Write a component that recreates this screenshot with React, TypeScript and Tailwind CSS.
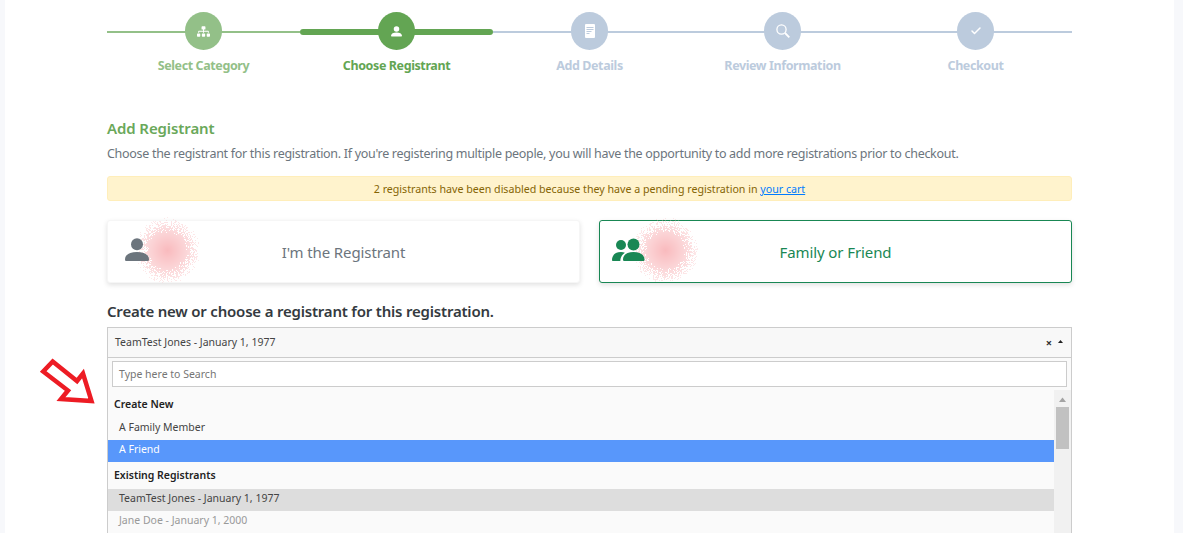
import type { ReactNode } from 'react'
import { FaSitemap } from 'react-icons/fa'
import { Check } from 'lucide-react'

function seededSpots(seed: number) {
    let s = seed
    const rand = () => {
        s = (s * 16807) % 2147483647
        return s / 2147483647
    }
    const spots: { x: number; y: number; o: number }[] = []
    for (let y = 0; y < 70; y++) {
        for (let x = 0; x < 70; x++) {
            const r = Math.hypot(x - 35, y - 35)
            if (r > 33) continue
            const fall = 1 - r / 33
            if (rand() > fall * 2 + 0.06) continue
            spots.push({ x, y, o: 0.25 + fall * 0.6 })
        }
    }
    return spots
}

function Smudge({ seed, className }: { seed: number; className: string }) {
    return (
        <svg width="70" height="70" viewBox="0 0 70 70" className={className}>
            {seededSpots(seed).map((p, i) => (
                <rect key={i} x={p.x} y={p.y} width="1" height="1" fill="#f8aeb2" opacity={p.o} />
            ))}
        </svg>
    )
}

function PersonIcon({ className }: { className: string }) {
    return (
        <svg viewBox="0 0 24 24" className={className} fill="currentColor">
            <circle cx="12" cy="6.3" r="6" />
            <path d="M0 21.5C0 16.5 5 14 12 14s12 2.5 12 7.5c0 1-.6 1.5-1.5 1.5h-21C.6 23 0 22.500 0 21.500z" />
        </svg>
    )
}

function FriendsIcon({ className }: { className: string }) {
    return (
        <svg viewBox="0 0 33 24" className={className} fill="currentColor">
            <circle cx="9" cy="7" r="5" />
            <path d="M0 22c0-4.500 3-8 9-8 1.500 0 2.800.2 3.900.7C10 16.500 8.300 19.500 8.300 23H1.200C.4 23 0 22.700 0 22z" />
            <circle cx="21.500" cy="6.500" r="6" />
            <path d="M11 21.500c0-4.500 4-7.500 10.500-7.500S32.500 17 32.500 21.500c0 1-.6 1.500-1.500 1.500H12.500c-.9 0-1.500-.5-1.500-1.500z" />
        </svg>
    )
}

function DocIcon() {
    return (
        <svg width="10" height="14" viewBox="0 0 10 14">
            <rect width="10" height="14" rx="1" fill="#ffffff" />
            <path d="M1.500 3.500h7M1.500 5.500h7M1.500 7.500h5M1.500 9.500h3" stroke="#bccbdd" strokeWidth="1" />
        </svg>
    )
}

function SearchIcon() {
    return (
        <svg width="14" height="14" viewBox="0 0 14 14" fill="none" stroke="#ffffff">
            <circle cx="5.500" cy="5.500" r="4.600" strokeWidth="1.300" />
            <path d="M9 9l4.300 4.300" strokeWidth="1.800" />
        </svg>
    )
}

interface Step {
    label: string;
    icon: ReactNode;
    circle: string;
    text: string;
    line: string;
}

const steps: Step[] = [
    {
        label: 'Select Category',
        icon: <FaSitemap size={13} />,
        circle: 'bg-[#93c088]',
        text: 'text-[#93c088]',
        line: 'h-0.5 bg-[#93c088]',
    },
    {
        label: 'Choose Registrant',
        icon: <PersonIcon className="h-[11px] w-[11px]" />,
        circle: 'bg-[#63a553]',
        text: 'text-[#63a553]',
        line: 'h-1.5 rounded-full bg-[#63a553]',
    },
    {
        label: 'Add Details',
        icon: <DocIcon />,
        circle: 'bg-[#bccbdd]',
        text: 'text-[#bccbdd]',
        line: 'h-0.5 bg-[#bccbdd]',
    },
    {
        label: 'Review Information',
        icon: <SearchIcon />,
        circle: 'bg-[#bccbdd]',
        text: 'text-[#bccbdd]',
        line: 'h-0.5 bg-[#bccbdd]',
    },
    {
        label: 'Checkout',
        icon: <Check size={12} strokeWidth={3} />,
        circle: 'bg-[#bccbdd]',
        text: 'text-[#bccbdd]',
        line: 'h-0.5 bg-[#bccbdd]',
    },
]

function StepItem({ step }: { step: Step }) {
    return (
        <div className="relative flex flex-col items-center">
            <div className="relative flex h-[38px] w-full items-center justify-center">
                <div className={`absolute left-0 right-0 top-[20px] -translate-y-1/2 ${step.line}`} />
                <div className={`relative flex h-[38px] w-[37px] items-center justify-center rounded-full text-white ${step.circle}`}>
                    {step.icon}
                </div>
            </div>
            <div className={`mt-[7px] text-[12.5px] font-bold leading-[18px] tracking-[-0.4px] ${step.text}`}>
                {step.label}
            </div>
        </div>
    )
}

function ChoiceCard({ selected, label, icon, seed, smudge }: { selected?: boolean; label: string; icon: ReactNode; seed: number; smudge: string }) {
    return (
        <div
            className={`relative flex h-[63px] items-center justify-center rounded-[3px] bg-white shadow-[0_2px_5px_rgba(0,0,0,0.12)] ${
                selected ? 'border border-[#198754] text-[#198754]' : 'border border-[#f6f6f6] text-[#6c757d]'
            }`}
        >
            <Smudge seed={seed} className={`absolute top-[-6px] ${smudge}`} />
            {icon}
            <span className="text-[15px] leading-5 tracking-[-0.1px]">{label}</span>
        </div>
    )
}

export default function App() {
    return (
        <div className="h-[533px] overflow-hidden bg-[#f7f8fb] font-['Noto_Sans','Open_Sans',sans-serif]">
            <div className="mx-[5px] h-full w-[1169px] bg-white px-[102px] pt-3">
                <div className="grid w-[965px] grid-cols-5">
                    {steps.map(step => (
                        <StepItem key={step.label} step={step} />
                    ))}
                </div>

                <h2 className="mt-[43px] text-[15px] font-semibold leading-5 tracking-[-0.1px] text-[#6aa85a]">Add Registrant</h2>
                <p className="mt-[7px] whitespace-nowrap text-[12.5px] leading-[18px] tracking-[-0.3px] text-[#6c757d]">
                    Choose the registrant for this registration. If you're registering multiple people, you will have the opportunity to add more registrations prior to checkout.
                </p>

                <div className="mt-[13px] h-[25px] w-[965px] rounded-[3px] border border-[#ffeeba] bg-[#fff3cd] text-center text-[10.65px] leading-[24px] text-[#856404]">
                    2 registrants have been disabled because they have a pending registration in <span className="text-[#007bff] underline">your cart</span>
                </div>

                <div className="mt-[19px] grid w-[965px] grid-cols-2 gap-[19px]">
                    <ChoiceCard
                        label="I'm the Registrant"
                        seed={1234}
                        smudge="left-[24px]"
                        icon={<PersonIcon className="absolute left-[17px] top-[17px] h-6 w-6 text-[#6c757d]" />}
                    />
                    <ChoiceCard
                        selected
                        label="Family or Friend"
                        seed={9876}
                        smudge="left-[30px]"
                        icon={<FriendsIcon className="absolute left-[12px] top-[17px] h-6 w-[33px] text-[#198754]" />}
                    />
                </div>

                <h3 className="mt-[18px] text-[15px] font-semibold leading-5 tracking-[-0.2px] text-[#343a40]">
                    Create new or choose a registrant for this registration.
                </h3>

                <div className="relative mt-[6px] w-[965px] border border-[#cccccc]">
                    <div className="flex h-[30px] items-center justify-between border-b border-[#cccccc] bg-[#f8f8f8] pl-[7px] pr-[8px] text-[10.500px] text-[#444444]">
                        <span className="pt-px">TeamTest Jones - January 1, 1977</span>
                        <span className="flex items-center gap-[6px]">
                            <span className="text-[11px] font-bold leading-none text-[#333333]">×</span>
                            <svg width="5" height="3" viewBox="0 0 5 3" className="mb-[3px]">
                                <path d="M0 3 2.500 0 5 3z" fill="#222222" />
                            </svg>
                        </span>
                    </div>
                    <div className="bg-[#fafafa] px-1 pt-[3px]">
                        <div className="h-[26px] border border-[#cccccc] bg-white pl-[6px] text-[10.500px] leading-[24px] text-[#757575]">
                            Type here to Search
                        </div>
                    </div>
                    <div className="flex h-[146px] bg-[#fafafa]">
                        <div className="flex-1 pt-[9px] text-[10.500px] text-[#444444]">
                            <div className="h-[18px] pl-[6px] font-semibold leading-[16px] text-[#222222]">Create New</div>
                            <div className="mt-[4px] h-[22px] pl-[11px] leading-[19px]">A Family Member</div>
                            <div className="h-[22px] bg-[#5897fb] pl-[11px] leading-[19px] text-white">A Friend</div>
                            <div className="h-[27px] pl-[6px] pt-[4px] font-semibold leading-[18px] text-[#222222]">Existing Registrants</div>
                            <div className="h-[22px] bg-[#dddddd] pl-[11px] leading-[19px]">TeamTest Jones - January 1, 1977</div>
                            <div className="h-[22px] pl-[11px] leading-[19px] text-[#999999]">Jane Doe - January 1, 2000</div>
                        </div>
                        <div className="mt-[3px] w-[17px] bg-[#f1f1f1] px-[2px]">
                            <svg width="13" height="17" viewBox="0 0 13 17" className="block">
                                <path d="M3 12 6.500 7.500 10 12z" fill="#a3a3a3" />
                            </svg>
                            <div className="h-[42px] bg-[#c1c1c1]" />
                        </div>
                    </div>
                </div>
            </div>

            <svg width="70" height="60" viewBox="0 0 70 60" className="absolute left-[35px] top-[355px]">
                <path
                    d="M17.700 6.500 42 26 48 18.500 56.500 46 26 44 33 35.500 8.200 16.500z"
                    fill="#fff"
                    stroke="#ed1c24"
                    strokeWidth="4.500"
                />
            </svg>
        </div>
    )
}
